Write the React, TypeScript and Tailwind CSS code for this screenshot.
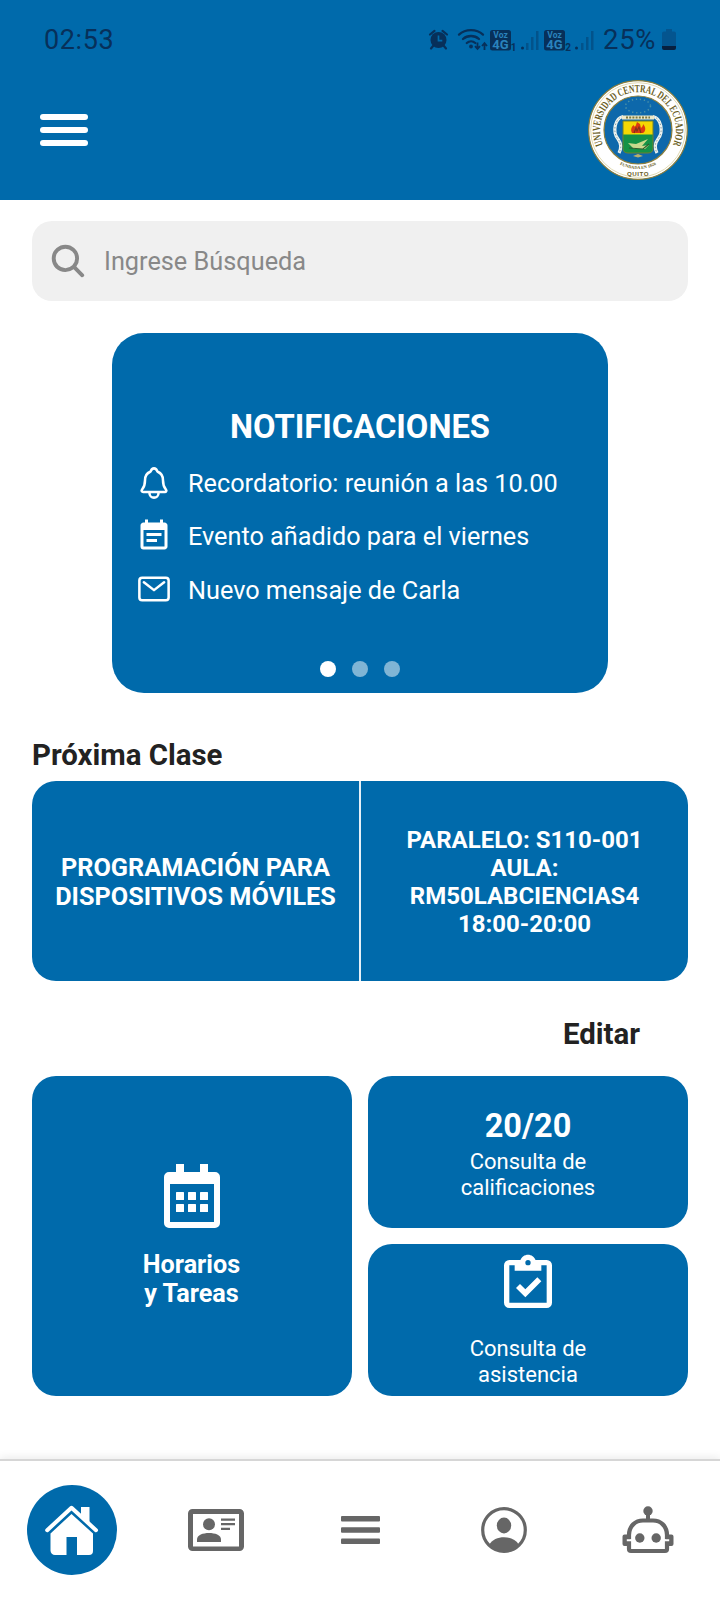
import type { ReactNode } from "react";
import { IoMailOutline, IoNotificationsOutline, IoSearch } from "react-icons/io5";
import { MdEventNote } from "react-icons/md";

function SignalIcons() {
  return (
    <svg width="168" height="26" viewBox="428 27 168 26" fill="#07305a">
      {/* alarm */}
      <circle cx="438.5" cy="40" r="8" />
      <path d="M430 34.500l4.500-3.600M447 34.500l-4.500-3.600M433.500 45.500l-2.500 3M443.500 45.500l2.500 3" stroke="#07305a" strokeWidth="2.200" strokeLinecap="round" />
      <path d="M438.500 35.500v5.200h3.800" fill="none" stroke="#006aab" strokeWidth="1.700" />
      {/* wifi */}
      <g fill="none" stroke="#07305a" strokeWidth="2.300" strokeLinecap="round">
        <path d="M459 34.600c6.500-6 17.500-6 24 0" />
        <path d="M463 39c4.500-4 11.500-4 16 0" />
        <path d="M466.800 43c2.500-2.200 6-2.200 8.500 0" />
      </g>
      <circle cx="471" cy="46.500" r="1.900" />
      <path d="M477.500 42.500v6M475 46.200l2.500 2.800 2.500-2.800M484.500 50v-6M482 46l2.500-2.800L487 46" fill="none" stroke="#07305a" strokeWidth="1.800" />
      {/* sim 1 */}
      <rect x="490" y="30" width="21" height="20.500" rx="2.500" />
      <text x="500.500" y="37.700" textAnchor="middle" fontFamily="Roboto, sans-serif" fontSize="8.500" fontWeight="700" fill="#2a83bd">Voz</text>
      <text x="500.500" y="49.300" textAnchor="middle" fontFamily="Roboto, sans-serif" fontSize="13" fontWeight="700" fill="#2a83bd">4G</text>
      <text x="510.700" y="50.500" fontFamily="Roboto, sans-serif" fontSize="10" fontWeight="700">1</text>
      <circle cx="522.500" cy="48" r="1.500" />
      <g opacity=".38">
        <rect x="526" y="43" width="2.500" height="7" />
        <rect x="531" y="37" width="2.500" height="13" />
        <rect x="536" y="31" width="2.500" height="19" />
      </g>
      {/* sim 2 */}
      <rect x="544" y="30" width="21" height="20.500" rx="2.500" />
      <text x="554.500" y="37.700" textAnchor="middle" fontFamily="Roboto, sans-serif" fontSize="8.500" fontWeight="700" fill="#2a83bd">Voz</text>
      <text x="554.500" y="49.300" textAnchor="middle" fontFamily="Roboto, sans-serif" fontSize="13" fontWeight="700" fill="#2a83bd">4G</text>
      <text x="565.300" y="50.500" fontFamily="Roboto, sans-serif" fontSize="10" fontWeight="700">2</text>
      <circle cx="576.500" cy="48" r="1.500" />
      <g opacity=".38">
        <rect x="581" y="43" width="2.500" height="7" />
        <rect x="586" y="37" width="2.500" height="13" />
        <rect x="591" y="31" width="2.500" height="19" />
      </g>
    </svg>
  );
}

function BatteryIcon() {
  return (
    <svg width="14" height="22" viewBox="0 0 14 22">
      <path d="M4 0h6v2.500h2a2 2 0 0 1 2 2V17H0V4.500a2 2 0 0 1 2-2h2z" fill="#04558f" />
      <path d="M0 17h14v2a2 2 0 0 1-2 2H2a2 2 0 0 1-2-2z" fill="#07203f" />
    </svg>
  );
}

function UniversitySeal() {
  return (
    <svg width="100" height="102" viewBox="-50 -51 100 102">
      <circle r="49.300" fill="#fff" stroke="#8d7f3d" strokeWidth="1.200" />
      <circle r="47.300" fill="none" stroke="#d8cf9f" strokeWidth="0.800" />
      <circle r="34" fill="#0d68ab" stroke="#8d7f3d" strokeWidth="1.200" />
      <defs>
        <path id="sealTop" d="M-34.900 14.800A37.900 37.900 0 1 1 34.900 14.800" />
        <path id="sealBottom" d="M-20 33.500A39 39 0 0 0 20 33.500" />
      </defs>
      <text fontFamily="'Liberation Serif', serif" fontSize="11" fontWeight="700" fill="#6a5d1d">
        <textPath href="#sealTop" startOffset="0" textLength="149" lengthAdjust="spacingAndGlyphs">UNIVERSIDAD CENTRAL DEL ECUADOR</textPath>
      </text>
      <text fontFamily="'Liberation Serif', serif" fontSize="4.300" fontWeight="700" fill="#6a5d1d" textAnchor="middle">
        <textPath href="#sealBottom" startOffset="50%">FUNDADA EN 1826</textPath>
      </text>
      <text x="0" y="46.200" fontFamily="'Liberation Sans', sans-serif" fontSize="6.200" fontWeight="700" fill="#6a5d1d" textAnchor="middle" letterSpacing=".5">QUITO</text>
      <ellipse cx="0" cy="-24" rx="12.500" ry="6.800" fill="none" stroke="#4b91a8" strokeWidth="1.500" strokeDasharray="1.300 2.700" />
      {/* ribbon */}
      <path d="M-15-13.500C-23-12-26 2-20 9c3 4 4 8 1 14M15-13.500C23-12 26 2 20 9c-3 4-4 8-1 14" fill="none" stroke="#edf2ee" strokeWidth="3.200" />
      <path d="M-15-13.500C-23-12-26 2-20 9c3 4 4 8 1 14M15-13.500C23-12 26 2 20 9c-3 4-4 8-1 14" fill="none" stroke="#6e8b96" strokeWidth=".8" strokeDasharray="1.500 2" />
      <path d="M-16-14.500h32v4h-32z" fill="#eee9c9" />
      <path d="M-12-12.500h24" stroke="#7c793f" strokeWidth="1.800" strokeDasharray="2 1.200" />
      {/* shield */}
      <path d="M-15-9h30V5h-30z" fill="#f4d803" />
      <path d="M-15 4.500h30V18q0 5-5 5h-20q-5 0-5-5z" fill="#149246" />
      <path d="M-15-9h30V18q0 5-5 5h-20q-5 0-5-5z" fill="none" stroke="#71802c" strokeWidth="1" />
      <path d="M-6 3c-2-4 0-7 2-8 0 2 1 2 2 0l1-3 3 2 1 4c2-2 2-3 2-4 3 3 3 7 0 9z" fill="#dc3a12" />
      <path d="M-4 3l2-5 1 3 2-4 2 6" fill="none" stroke="#81331b" strokeWidth="1.200" />
      <path d="M-10 13l8 1 12-5-6 7 7-1-4 4h-11z" fill="#c8d98c" />
      <path d="M-9 18l14 1 6-5" fill="none" stroke="#2e5b2d" strokeWidth="1.200" />
      <path d="M-5 26l5-2 5 2-5 1.500z" fill="#b9b06b" />
    </svg>
  );
}

function CalendarIcon() {
  return (
    <svg width="56" height="64" viewBox="0 0 56 64" fill="#fff">
      <path fillRule="evenodd" d="M12 0h8v8h16V0h8v8h7a5 5 0 0 1 5 5v46a5 5 0 0 1-5 5H5a5 5 0 0 1-5-5V13a5 5 0 0 1 5-5h7zM6 20v38h44V20z" />
      {[28, 40].map((y) => [12, 24, 36].map((x) => <rect key={`${x}-${y}`} x={x} y={y} width="8" height="8" rx=".5" />))}
    </svg>
  );
}

function ClipboardIcon() {
  return (
    <svg width="64" height="64" viewBox="0 0 24 24" fill="#fff">
      <path d="M19 3h-4.180C14.400 1.840 13.300 1 12 1s-2.400.840-2.820 2H5a2 2 0 0 0-2 2v14a2 2 0 0 0 2 2h14a2 2 0 0 0 2-2V5a2 2 0 0 0-2-2m-7 0a1 1 0 0 1 1 1 1 1 0 0 1-1 1 1 1 0 0 1-1-1 1 1 0 0 1 1-1M7 7h10V5h2v14H5V5h2v2m.500 6.500L9 12l2 2 4.500-4.500L17 11l-6 6-3.500-3.500z" />
    </svg>
  );
}

function HomeIcon() {
  return (
    <svg width="54" height="50" viewBox="0 0 54 50" fill="#fff">
      <path d="M2.200 25.200L26.500 2.800 51 25.200" fill="none" stroke="#fff" strokeWidth="4" strokeLinecap="round" strokeLinejoin="round" />
      <path d="M36 2h8.500v16L36 10z" />
      <path d="M5.500 28.500L26.500 9l21.500 19.500V46a4 4 0 0 1-4 4H32V32H21.500v18H10a4.500 4.500 0 0 1-4.500-4.500z" />
    </svg>
  );
}

function IdCardIcon() {
  return (
    <svg width="56" height="42" viewBox="0 0 56 42" fill="#666">
      <path fillRule="evenodd" d="M4.500 0h47A4.500 4.500 0 0 1 56 4.500v33a4.500 4.500 0 0 1-4.500 4.500h-47A4.500 4.500 0 0 1 0 37.500v-33A4.500 4.500 0 0 1 4.500 0zM5 5v32.500h46V5z" />
      <circle cx="21" cy="15.200" r="6" />
      <path d="M9 33v-2.500C9 26 15 24 21 24s12 2 12 6.500V33z" />
      <path d="M33 9.500h14v2.200H33zM33 14h14v2.200H33zM33 18.700h9v2.200h-9z" />
    </svg>
  );
}

function MenuIcon() {
  return (
    <svg width="39" height="28" viewBox="0 0 39 28" fill="#666">
      <rect width="39" height="5.600" rx="1" />
      <rect y="11.200" width="39" height="5.600" rx="1" />
      <rect y="22.400" width="39" height="5.600" rx="1" />
    </svg>
  );
}

function ProfileIcon() {
  return (
    <svg width="46" height="46" viewBox="0 0 46 46" fill="#666">
      <circle cx="23" cy="23" r="21.300" fill="none" stroke="#666" strokeWidth="3.200" />
      <ellipse cx="23" cy="18.500" rx="7.200" ry="7.900" />
      <path d="M8 38c3-5.500 9-7.800 15-7.800s12 2.300 15 7.800a21.500 21.500 0 0 1-30 0z" />
    </svg>
  );
}

function RobotIcon() {
  return (
    <svg width="52" height="48" viewBox="0 0 52 48">
      <circle cx="26" cy="5" r="4.700" fill="#666" />
      <path d="M26 7v7" stroke="#666" strokeWidth="4" />
      <path d="M7 33.500V29C7 20 13.500 14.500 21 14.500h10c7.500 0 14 5.500 14 14.500v4.500" fill="none" stroke="#666" strokeWidth="4.200" />
      <path d="M7 35v8q0 2 2 2h34q2 0 2-2v-8" fill="none" stroke="#666" strokeWidth="4.200" />
      <path d="M2.500 28.500H8V40H2.500a2 2 0 0 1-2-2v-7.500a2 2 0 0 1 2-2zM49.500 28.500H44V40h5.500a2 2 0 0 0 2-2v-7.500a2 2 0 0 0-2-2z" fill="#666" />
      <path d="M4.800 34.200h5.700M41.500 34.200h5.700" stroke="#fff" strokeWidth="2" />
      <circle cx="17.800" cy="32" r="4.700" fill="#666" />
      <circle cx="34.200" cy="32" r="4.700" fill="#666" />
    </svg>
  );
}

function Notice({ icon, children }: { icon: ReactNode; children: ReactNode }) {
  return (
    <li className="flex h-[53.400px] items-center gap-4">
      <span className="flex size-9 items-center justify-center">{icon}</span>
      <span className="pt-0.5 whitespace-nowrap">{children}</span>
    </li>
  );
}

export default function App() {
  return (
    <div className="flex h-[1600px] w-[720px] flex-col overflow-hidden bg-white font-['Roboto',sans-serif] text-white">
      <header className="h-[200px] shrink-0 bg-[#006aab]">
        <div className="flex h-20 items-center pr-[44px] pl-[44px] text-[#07305a]">
          <span className="text-[27px] leading-none tracking-[0.6px]">02:53</span>
          <div className="ml-auto flex items-center">
            <SignalIcons />
            <span className="ml-[7px] w-[59px] text-[27.500px] leading-none tracking-[0.7px]">25%</span>
            <BatteryIcon />
          </div>
        </div>
        <div className="flex h-[100px] items-center justify-between pr-8 pl-10">
          <button className="flex h-8 w-12 flex-col justify-between" aria-label="Menú">
            <span className="h-1.5 w-full rounded-full bg-white" />
            <span className="h-1.5 w-full rounded-full bg-white" />
            <span className="h-1.5 w-full rounded-full bg-white" />
          </button>
          <UniversitySeal />
        </div>
      </header>

      <main className="flex flex-1 flex-col px-8 pt-[21px]">
        <div className="flex h-20 shrink-0 items-center gap-4 rounded-[20px] bg-[#f0f0f0] px-4 text-[25.300px] text-[#888]">
          <IoSearch size={40} />
          <span className="pt-0.5">Ingrese Búsqueda</span>
        </div>

        <section className="mt-8 flex h-[360px] w-[496px] shrink-0 flex-col self-center rounded-[32px] bg-[#006aab] px-6 pt-[75px]">
          <h2 className="text-center text-[32.700px] leading-[39px] font-bold">NOTIFICACIONES</h2>
          <ul className="mt-[9px] text-[25.250px]">
            <Notice icon={<IoNotificationsOutline size={36} className="[&_path]:stroke-[36]" />}>Recordatorio: reunión a las 10.00</Notice>
            <Notice icon={<MdEventNote size={36} />}>Evento añadido para el viernes</Notice>
            <Notice icon={<IoMailOutline size={36} className="[&_path]:stroke-[36] [&_rect]:stroke-[36]" />}>Nuevo mensaje de Carla</Notice>
          </ul>
          <div className="mt-auto mb-4 flex justify-center gap-4">
            <span className="size-4 rounded-full bg-white" />
            <span className="size-4 rounded-full bg-white/50" />
            <span className="size-4 rounded-full bg-white/50" />
          </div>
        </section>

        <h3 className="mt-[45px] text-[29.400px] leading-[34px] font-bold text-[#222]">Próxima Clase</h3>
        <section className="mt-[9px] flex h-[200px] shrink-0 items-center rounded-3xl bg-[#006aab] text-center font-bold">
          <p className="flex-1 pt-0.5 text-[25.250px] leading-[29.300px]">PROGRAMACIÓN PARA<br />DISPOSITIVOS MÓVILES</p>
          <div className="h-full w-0.5 bg-white/90" />
          <p className="flex-1 pt-0.5 text-[24px] leading-7">PARALELO: S110-001<br />AULA:<br />RM50LABCIENCIAS4<br />18:00-20:00</p>
        </section>

        <button className="mt-[36px] mr-12 self-end text-[29.400px] leading-[34px] font-bold text-[#222]">Editar</button>
        <section className="mt-[25px] grid h-[320px] shrink-0 grid-cols-2 grid-rows-2 gap-4 text-center">
          <div className="row-span-2 flex flex-col items-center rounded-3xl bg-[#006aab] pt-[88px]">
            <CalendarIcon />
            <p className="mt-[22px] pr-px text-[25.200px] leading-[29.300px] font-bold">Horarios<br />y Tareas</p>
          </div>
          <div className="flex flex-col items-center rounded-3xl bg-[#006aab] pt-[31px]">
            <strong className="text-[32.500px] leading-[38px] font-bold">20/20</strong>
            <p className="mt-1 text-[22px] leading-[26px]">Consulta de<br />calificaciones</p>
          </div>
          <div className="flex flex-col items-center rounded-3xl bg-[#006aab] pt-2">
            <ClipboardIcon />
            <p className="mt-5 text-[22px] leading-[26px]">Consulta de<br />asistencia</p>
          </div>
        </section>
      </main>

      <nav className="grid h-[141px] shrink-0 grid-cols-5 place-items-center border-t-2 border-[#d6d6d6] bg-white pb-0.5 shadow-[0_-2px_8px_rgba(0,0,0,0.08)]">
        <button className="flex size-[90px] items-center justify-center rounded-full bg-[#006aab]" aria-label="Inicio"><HomeIcon /></button>
        <IdCardIcon />
        <MenuIcon />
        <ProfileIcon />
        <RobotIcon />
      </nav>
    </div>
  );
}
